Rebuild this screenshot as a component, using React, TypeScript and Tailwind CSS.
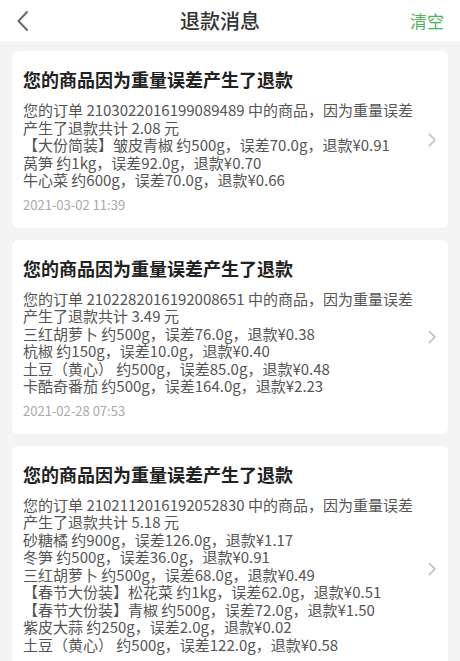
import React from "react";

type Refund = {
  order: string;
  total: string;
  items: string[];
  date: string;
};

const refunds: Refund[] = [
  {
    order: "2103022016199089489",
    total: "2.08",
    items: [
      "【大份简装】皱皮青椒 约500g，误差70.0g，退款¥0.91",
      "莴笋 约1kg，误差92.0g，退款¥0.70",
      "牛心菜 约600g，误差70.0g，退款¥0.66",
    ],
    date: "2021-03-02 11:39",
  },
  {
    order: "2102282016192008651",
    total: "3.49",
    items: [
      "三红胡萝卜 约500g，误差76.0g，退款¥0.38",
      "杭椒 约150g，误差10.0g，退款¥0.40",
      "土豆（黄心） 约500g，误差85.0g，退款¥0.48",
      "卡酷奇番茄 约500g，误差164.0g，退款¥2.23",
    ],
    date: "2021-02-28 07:53",
  },
  {
    order: "2102112016192052830",
    total: "5.18",
    items: [
      "砂糖橘 约900g，误差126.0g，退款¥1.17",
      "冬笋 约500g，误差36.0g，退款¥0.91",
      "三红胡萝卜 约500g，误差68.0g，退款¥0.49",
      "【春节大份装】松花菜 约1kg，误差62.0g，退款¥0.51",
      "【春节大份装】青椒 约500g，误差72.0g，退款¥1.50",
      "紫皮大蒜 约250g，误差2.0g，退款¥0.02",
      "土豆（黄心） 约500g，误差122.0g，退款¥0.58",
    ],
    date: "2021-02-08 10:12",
  },
];

const RefundCard = ({ r }: { r: Refund }) => (
  <div className="bg-white rounded-[6px] pl-[11px] pr-[11px] pt-[16px] pb-[15px] flex items-center">
    <div className="flex-1 min-w-0">
      <div className="text-[18px] leading-[24px] font-bold text-[#222]">
        您的商品因为重量误差产生了退款
      </div>
      <div className="mt-[10px] text-[15px] leading-[17.5px] text-[#555] pr-[8px]">
        <div>
          您的订单 {r.order} 中的商品，因为重量误差产生了退款共计 {r.total} 元
        </div>
        {r.items.map((it) => (
          <div key={it}>{it}</div>
        ))}
      </div>
      <div className="mt-[8px] text-[13px] leading-[16px] text-[#aaa]">{r.date}</div>
    </div>
    <svg width="9" height="14" viewBox="0 0 9 14" className="shrink-0 ml-[6px]">
      <path d="M1.5 1.5 L7 7 L1.5 12.5" fill="none" stroke="#c8c8c8" strokeWidth="1.8" strokeLinecap="round" strokeLinejoin="round" />
    </svg>
  </div>
);

export default function App() {
  return (
    <div
      className="w-[460px] h-[661px] overflow-hidden bg-[#f4f4f4] flex flex-col"
      style={{ fontFamily: '"Noto Sans CJK SC", "Noto Sans", sans-serif' }}
    >
      <div className="h-[41px] bg-white flex items-center justify-between px-[16px] shrink-0">
        <svg width="14" height="22" viewBox="0 0 14 22">
          <path d="M11 2 L2.5 11 L11 20" fill="none" stroke="#6b6b70" strokeWidth="2" strokeLinecap="round" strokeLinejoin="round" />
        </svg>
        <div className="text-[20px] text-[#333] font-medium">退款消息</div>
        <div className="text-[17px] text-[#4fb35d]">清空</div>
      </div>
      <div className="flex flex-col gap-[12px] px-[12px] pt-[10px]">
        {refunds.map((r) => (
          <RefundCard key={r.order} r={r} />
        ))}
      </div>
    </div>
  );
}
